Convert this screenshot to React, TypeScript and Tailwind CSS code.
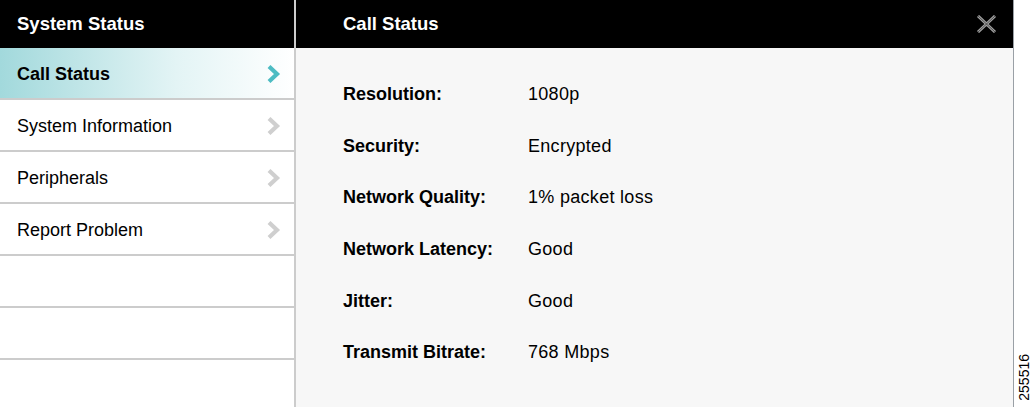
import React from "react"

const MENU = [
  { label: "Call Status", active: true },
  { label: "System Information" },
  { label: "Peripherals" },
  { label: "Report Problem" },
  { label: "" },
  { label: "" },
]

const STATUS = [
  { label: "Resolution:", value: "1080p" },
  { label: "Security:", value: "Encrypted" },
  { label: "Network Quality:", value: "1% packet loss" },
  { label: "Network Latency:", value: "Good" },
  { label: "Jitter:", value: "Good" },
  { label: "Transmit Bitrate:", value: "768 Mbps" },
]

function Chevron({ active }: { active?: boolean }) {
  return (
    <svg width="15" height="18" viewBox="0 0 15 18" className="mr-[13px] mt-[2px]">
      <polyline
        points="3,1.5 11,9 3,16.5"
        fill="none"
        stroke={active ? "#4dbcc3" : "#cfcfcf"}
        strokeWidth="4.2"
      />
    </svg>
  )
}

function CloseIcon() {
  return (
    <svg width="21" height="18" viewBox="0 0 21 18">
      <g fill="none" strokeLinecap="butt">
        <path d="M2 1 L19 17 M19 1 L2 17" stroke="#a0a0a0" strokeWidth="3" />
        <path d="M2 1 L19 17 M19 1 L2 17" stroke="#3a3a3a" strokeWidth="0.8" />
      </g>
    </svg>
  )
}

export default function App() {
  return (
    <div
      className="flex w-[1033px] h-[407px] bg-white overflow-hidden"
      style={{ fontFamily: '"Liberation Sans", Arial, sans-serif' }}
    >
      {/* Sidebar */}
      <div className="w-[296px] h-full flex flex-col border-r-2 border-[#cccccc] bg-white">
        <div className="h-[48px] bg-black flex items-center pl-[17px] text-white font-bold text-[18.5px]">
          System Status
        </div>
        {MENU.map((item, i) => (
          <div
            key={i}
            className={
              item.active
                ? "h-[52px] flex items-center justify-between pl-[17px] border-b-2 border-[#cccccc] bg-gradient-to-r from-[#a2d9dc] via-[#e3f4f5] via-60% to-white font-bold text-black text-[18px]"
                : "h-[52px] flex items-center justify-between pl-[17px] border-b-2 border-[#cccccc] text-black text-[18px]"
            }
          >
            <span className="pt-[3px]">{item.label}</span>
            {item.label && <Chevron active={item.active} />}
          </div>
        ))}
      </div>

      {/* Detail panel */}
      <div className="w-[718px] h-full flex flex-col bg-[#f7f7f7] border-r border-[#9aa0a6]">
        <div className="h-[48px] bg-black flex items-center justify-between pl-[47px] pr-[16px] text-white font-bold text-[18.5px]">
          <span>Call Status</span>
          <CloseIcon />
        </div>
        <div className="pt-[21px] pl-[47px]">
          {STATUS.map((row) => (
            <div key={row.label} className="h-[51.6px] flex items-center text-[18px] text-black">
              <span className="w-[185px] font-bold">{row.label}</span>
              <span className="tracking-[0.3px]">{row.value}</span>
            </div>
          ))}
        </div>
      </div>

      {/* Figure number */}
      <div className="flex-1 h-full flex items-end justify-center pb-[6px]">
        <span className="[writing-mode:vertical-rl] rotate-180 text-[14px] text-black leading-none">
          255516
        </span>
      </div>
    </div>
  )
}
